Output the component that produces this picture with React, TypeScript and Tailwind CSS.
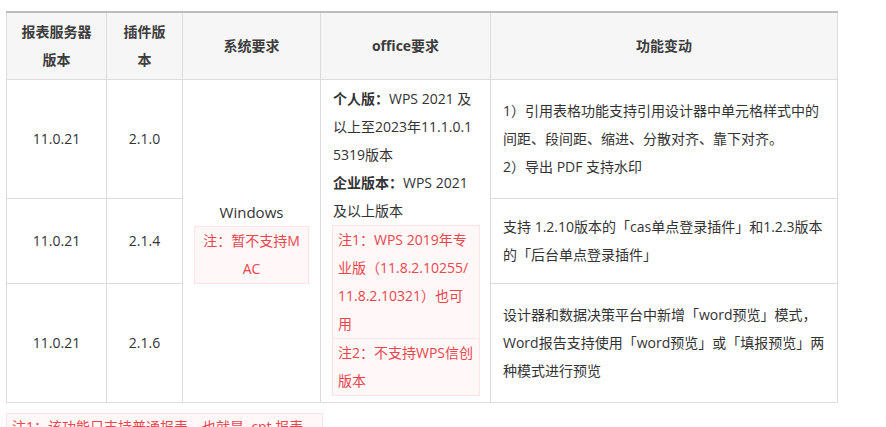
import React from "react";

const font = "font-['Open_Sans','Noto_Sans_CJK_SC',sans-serif]";

function Note({ children, className = "" }: { children: React.ReactNode; className?: string }) {
  return (
    <div className={`border border-[#fde3e6] bg-[#fff7f8] text-[#e8464d] ${className}`}>{children}</div>
  );
}

export default function App() {
  const th = "border border-[#dcdcdc] border-t-2 border-t-[#bdbdbd] bg-[#f6f6f6] font-bold text-[#3c3c3c] text-center align-middle";
  const td = "border border-[#dcdcdc] text-center align-middle";
  return (
    <div className={`min-h-[427px] bg-white pl-[6px] pt-[11px] text-[14px] leading-[28px] text-[#333] ${font}`}>
      <table className="w-[831px] table-fixed border-collapse">
        <colgroup>
          <col className="w-[100px]" />
          <col className="w-[76px]" />
          <col className="w-[138px]" />
          <col className="w-[170px]" />
          <col className="w-[347px]" />
        </colgroup>
        <thead>
          <tr className="h-[67px]">
            <th className={th}>
              报表服务器
              <br />
              版本
            </th>
            <th className={th}>
              插件版
              <br />
              本
            </th>
            <th className={th}>系统要求</th>
            <th className={th}>office要求</th>
            <th className={th}>功能变动</th>
          </tr>
        </thead>
        <tbody>
          <tr className="h-[119px]">
            <td className={td}>11.0.21</td>
            <td className={td}>2.1.0</td>
            <td className={`${td} px-[11px]`} rowSpan={3}>
              <div className="text-[15px]">Windows</div>
              <Note>
                注：暂不支持M
                <br />
                AC
              </Note>
            </td>
            <td className="border border-[#dcdcdc] pl-[11px] pr-[10px] align-middle text-left" rowSpan={3}>
              <div className="pl-px">
                <b>个人版：</b>WPS 2021 及
                <br />
                以上至2023年11.1.0.1
                <br />
                5319版本
                <br />
                <b>企业版本：</b>WPS 2021
                <br />
                及以上版本
              </div>
              <Note className="pl-[5px]">
                注1：WPS 2019年专
                <br />
                业版（11.8.2.10255/
                <br />
                11.8.2.10321）也可
                <br />
                用
              </Note>
              <Note className="-mt-px pl-[5px]">
                注2：不支持WPS信创
                <br />
                版本
              </Note>
            </td>
            <td className="border border-[#dcdcdc] px-[12px] text-left align-middle">
              1）引用表格功能支持引用设计器中单元格样式中的
              <br />
              间距、段间距、缩进、分散对齐、靠下对齐。
              <br />
              2）导出 PDF 支持水印
            </td>
          </tr>
          <tr className="h-[85px]">
            <td className={td}>11.0.21</td>
            <td className={td}>2.1.4</td>
            <td className="border border-[#dcdcdc] px-[12px] text-left align-middle">
              支持 1.2.10版本的「cas单点登录插件」和1.2.3版本
              <br />
              的「后台单点登录插件」
            </td>
          </tr>
          <tr className="h-[119px]">
            <td className={td}>11.0.21</td>
            <td className={td}>2.1.6</td>
            <td className="border border-[#dcdcdc] px-[12px] text-left align-middle">
              设计器和数据决策平台中新增「word预览」模式，
              <br />
              Word报告支持使用「word预览」或「填报预览」两
              <br />
              种模式进行预览
            </td>
          </tr>
        </tbody>
      </table>
      <div className="mt-[10px] w-[317px] border border-[#fde3e6] bg-[#fff7f8] px-[5px] pt-[2px] leading-[22px] text-[#e8464d]">
        注1：该功能只支持普通报表，也就是 .cpt 报表
      </div>
    </div>
  );
}
